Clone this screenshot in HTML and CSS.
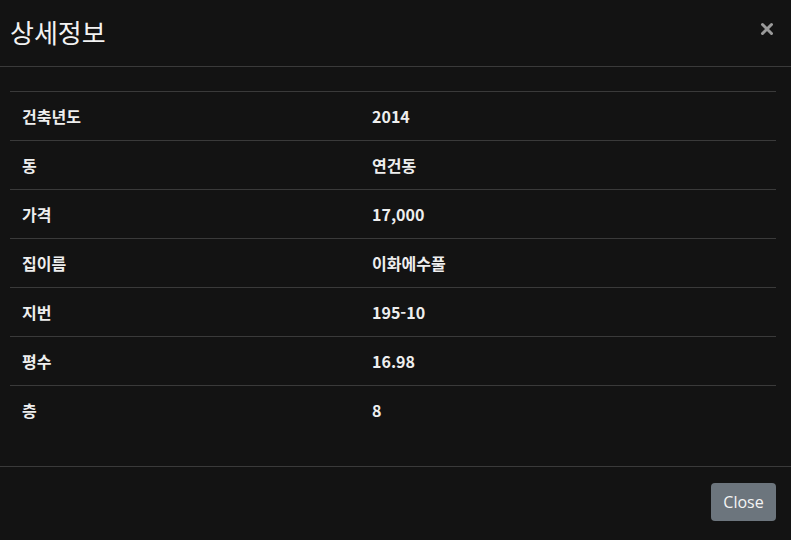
FILE: index.html
```html
<!DOCTYPE html>
<html lang="ko">
<head>
<meta charset="utf-8">
<link rel="stylesheet" href="styles.css">
</head>
<body>
<div class="modal">
  <div class="modal-header">
    <h5 class="modal-title">상세정보</h5>
    <button class="btn-close" type="button" aria-label="Close">
      <svg width="14" height="14" viewBox="0 0 14 14"><path d="M2.5 2.5 L11.5 11.5 M11.5 2.5 L2.5 11.5" stroke="#9a9a9a" stroke-width="3" stroke-linecap="round"/></svg>
    </button>
  </div>
  <div class="modal-body">
    <div class="table">
      <div class="row"><div class="cell">건축년도</div><div class="cell">2014</div></div>
      <div class="row"><div class="cell">동</div><div class="cell">연건동</div></div>
      <div class="row"><div class="cell">가격</div><div class="cell">17,000</div></div>
      <div class="row"><div class="cell">집이름</div><div class="cell">이화에수풀</div></div>
      <div class="row"><div class="cell">지번</div><div class="cell">195-10</div></div>
      <div class="row"><div class="cell">평수</div><div class="cell">16.98</div></div>
      <div class="row"><div class="cell">층</div><div class="cell">8</div></div>
    </div>
  </div>
  <div class="modal-footer">
    <button class="btn-secondary" type="button">Close</button>
  </div>
</div>
</body>
</html>
```
FILE: styles.css
```css
html, body {
  margin: 0;
  padding: 0;
  background: #131313;
  color: #f0f0f0;
  font-family: "Noto Sans CJK KR", "Noto Sans", sans-serif;
}
.modal {
  width: 791px;
  height: 540px;
  background: #131313;
  overflow: hidden;
}
.modal-header {
  height: 66px;
  border-bottom: 1px solid #3a3a3a;
  display: flex;
  align-items: center;
  justify-content: space-between;
  padding: 0 17px 0 10px;
  box-sizing: content-box;
}
.modal-title {
  margin: 0;
  font-size: 26px;
  font-weight: 400;
  color: #f2f2f2;
  line-height: 1;
  position: relative;
  top: -1px;
}
.btn-close {
  background: none;
  border: 0;
  padding: 0;
  width: 14px;
  height: 14px;
  display: flex;
  position: relative;
  top: -4px;
}
.modal-body {
  padding: 24px 15px 32px 10px;
}
.table {
  display: flex;
  flex-direction: column;
}
.row {
  display: grid;
  grid-template-columns: 350px 1fr;
  height: 48px;
  border-top: 1px solid #3a3a3a;
  align-items: center;
}
.cell {
  padding-left: 12px;
  font-size: 16px;
  font-weight: 700;
  color: #eeeeee;
  line-height: 1;
}
.modal-footer {
  border-top: 1px solid #3a3a3a;
  padding: 16px 15px;
  display: flex;
  justify-content: flex-end;
}
.btn-secondary {
  background: #6c757d;
  color: #f4f4f4;
  border: 0;
  border-radius: 4px;
  height: 38px;
  width: 65px;
  font-family: "Open Sans", "Noto Sans", sans-serif;
  font-size: 16px;
  padding: 0;
}
```
